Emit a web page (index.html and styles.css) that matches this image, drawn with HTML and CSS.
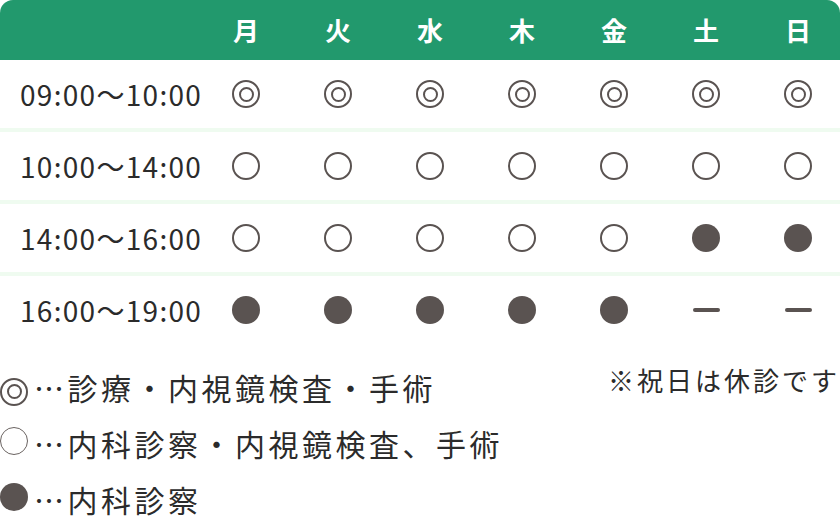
FILE: index.html
```html
<!DOCTYPE html>
<html lang="ja">
<head>
<meta charset="utf-8">
<title>診療時間</title>
<link rel="stylesheet" href="styles.css">
</head>
<body>
<div class="schedule">
  <div class="row head">
    <div class="cell time"></div>
    <div class="cell">月</div>
    <div class="cell">火</div>
    <div class="cell">水</div>
    <div class="cell">木</div>
    <div class="cell">金</div>
    <div class="cell">土</div>
    <div class="cell last">日</div>
  </div>
  <div class="row">
    <div class="cell time">09:00～10:00</div>
    <div class="cell"><span class="mk dbl"></span></div>
    <div class="cell"><span class="mk dbl"></span></div>
    <div class="cell"><span class="mk dbl"></span></div>
    <div class="cell"><span class="mk dbl"></span></div>
    <div class="cell"><span class="mk dbl"></span></div>
    <div class="cell"><span class="mk dbl"></span></div>
    <div class="cell last"><span class="mk dbl"></span></div>
  </div>
  <div class="row">
    <div class="cell time">10:00～14:00</div>
    <div class="cell"><span class="mk open"></span></div>
    <div class="cell"><span class="mk open"></span></div>
    <div class="cell"><span class="mk open"></span></div>
    <div class="cell"><span class="mk open"></span></div>
    <div class="cell"><span class="mk open"></span></div>
    <div class="cell"><span class="mk open"></span></div>
    <div class="cell last"><span class="mk open"></span></div>
  </div>
  <div class="row">
    <div class="cell time">14:00～16:00</div>
    <div class="cell"><span class="mk open"></span></div>
    <div class="cell"><span class="mk open"></span></div>
    <div class="cell"><span class="mk open"></span></div>
    <div class="cell"><span class="mk open"></span></div>
    <div class="cell"><span class="mk open"></span></div>
    <div class="cell"><span class="mk fill"></span></div>
    <div class="cell last"><span class="mk fill"></span></div>
  </div>
  <div class="row end">
    <div class="cell time">16:00～19:00</div>
    <div class="cell"><span class="mk fill"></span></div>
    <div class="cell"><span class="mk fill"></span></div>
    <div class="cell"><span class="mk fill"></span></div>
    <div class="cell"><span class="mk fill"></span></div>
    <div class="cell"><span class="mk fill"></span></div>
    <div class="cell"><span class="dash"></span></div>
    <div class="cell last"><span class="dash"></span></div>
  </div>
</div>
<div class="legend">
  <ul class="keys">
    <li><span class="mk key dbl" aria-label="◎"></span>…診療・内視鏡検査・手術</li>
    <li><span class="mk key open thin" aria-label="○"></span>…内科診察・内視鏡検査、手術</li>
    <li><span class="mk key fill" aria-label="●"></span>…内科診察</li>
  </ul>
  <p class="note">※祝日は休診です</p>
</div>
</body>
</html>
```
FILE: styles.css
```css
html, body {
  margin: 0;
  padding: 0;
  background: #ffffff;
}
body {
  width: 840px;
  overflow: hidden;
  font-family: "Noto Sans CJK JP", "Noto Sans", sans-serif;
  color: #2b2b2b;
}
.schedule {
  display: flex;
  flex-direction: column;
}
.row {
  display: grid;
  grid-template-columns: 200px repeat(6, 92px) 88px;
  height: 68px;
  border-bottom: 4px solid #effbf0;
}
.row.end {
  border-bottom: none;
}
.row.head {
  height: 60px;
  border-bottom: none;
  background: #22996d;
  border-radius: 13px 13px 0 0;
  color: #ffffff;
  font-weight: 700;
  font-size: 26px;
}
.cell {
  display: flex;
  align-items: center;
  justify-content: center;
  min-width: 0;
}
.cell.last {
  padding-left: 4px;
}
.row.head .cell {
  padding-bottom: 1px;
}
.cell.time {
  justify-content: flex-start;
  padding-left: 20px;
  font-size: 28px;
  letter-spacing: 1.3px;
  white-space: nowrap;
  color: #2b2b2b;
}
.mk {
  box-sizing: border-box;
  width: 28px;
  height: 28px;
  border-radius: 50%;
  display: flex;
  align-items: center;
  justify-content: center;
}
.dbl, .open {
  border: 2px solid #5a5351;
}
.open.thin {
  border-width: 1.6px;
  border-color: #6a6361;
}
.dbl::after {
  content: "";
  box-sizing: border-box;
  width: 15px;
  height: 15px;
  border-radius: 50%;
  border: 2px solid #5a5351;
}
.fill {
  background: #5a5351;
}
.dash {
  width: 27px;
  height: 4px;
  border-radius: 2px;
  background: #5a5351;
}
.legend {
  display: flex;
  justify-content: space-between;
  align-items: flex-start;
  margin-top: 15px;
}
.keys {
  list-style: none;
  margin: 0;
  padding: 0;
  font-size: 30px;
  line-height: 56px;
  letter-spacing: 3.5px;
}
.mk.key {
  display: inline-flex;
  vertical-align: 1px;
  margin-right: 6px;
}
.note {
  margin: 3px 0 0;
  font-size: 26px;
  line-height: 36px;
  letter-spacing: 3px;
  color: #2b2b2b;
}
```
